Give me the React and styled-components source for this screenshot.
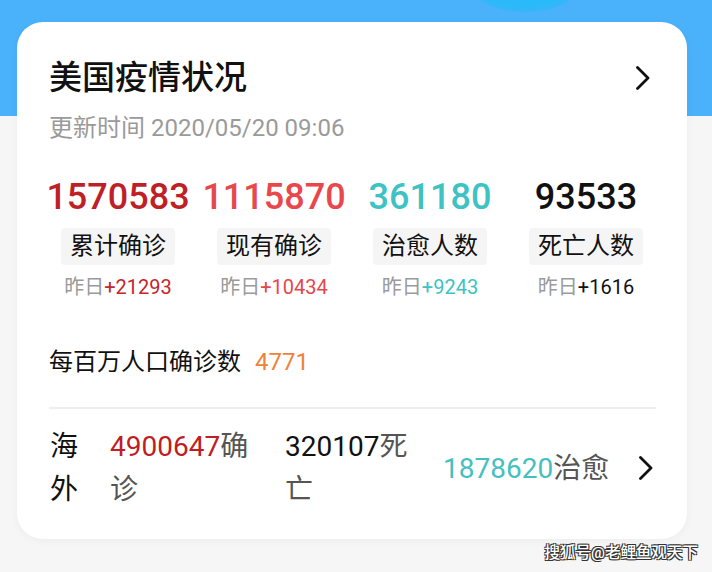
import React from "react";
import styled, { createGlobalStyle } from "styled-components";

const GlobalStyle = createGlobalStyle`
  html, body {
    margin: 0;
    padding: 0;
  }
  body {
    font-family: Roboto, "Noto Sans CJK SC", sans-serif;
    background: #f6f6f6;
  }
`;

const Page = styled.div`
  position: relative;
  width: 712px;
  height: 572px;
  overflow: hidden;
  background: linear-gradient(to bottom, #4ab1fb 0, #4ab1fb 116px, #f6f6f6 116px);
  padding: 22px 25px 0 17px;
  box-sizing: border-box;

  &::before {
    content: "";
    position: absolute;
    left: 472px;
    top: -40px;
    width: 106px;
    height: 52px;
    border-radius: 50%;
    background: radial-gradient(ellipse at center, #22bdf9 0%, #2bb9fa 55%, rgba(74, 177, 251, 0) 100%);
  }
`;

const Card = styled.div`
  position: relative;
  background: #fff;
  border-radius: 26px;
  box-shadow: 0 2px 8px rgba(0, 0, 0, 0.04);
  padding: 34px 23px 28px;
`;

const Header = styled.div`
  display: flex;
  align-items: center;
  justify-content: space-between;
  padding: 0 9px;
`;

const Title = styled.div`
  font-size: 33px;
  line-height: 44px;
  font-weight: 500;
  color: #111;
`;

const Chevron = ({ size = 24 }) => (
  <svg width="16" height={size} viewBox="0 0 16 24" fill="none">
    <path d="M2.5 1.5 L13 12 L2.5 22.5" stroke="#111" strokeWidth="2.8" strokeLinecap="round" strokeLinejoin="round" />
  </svg>
);

const ChevronWrap = styled.div`
  display: flex;
  align-items: center;
  margin-right: 4px;
`;

const Updated = styled.div`
  margin-top: 12px;
  padding: 0 9px;
  font-size: 24px;
  line-height: 32px;
  color: #9a9a9a;
`;

const Stats = styled.div`
  display: grid;
  grid-template-columns: repeat(4, 1fr);
  margin-top: 31px;
`;

const Stat = styled.div`
  display: flex;
  flex-direction: column;
  align-items: center;
`;

const BigNumber = styled.div`
  font-size: 36px;
  line-height: 44px;
  font-weight: 500;
  color: ${(p) => p.color};
`;

const Tag = styled.div`
  margin-top: 9px;
  height: 37px;
  line-height: 37px;
  padding: 0 9px;
  background: #f5f5f5;
  border-radius: 4px;
  font-size: 24px;
  color: #111;
`;

const Yesterday = styled.div`
  margin-top: 8px;
  font-size: 20px;
  line-height: 28px;
  color: #9a9a9a;

  span {
    color: ${(p) => p.color};
  }
`;

const PerMillion = styled.div`
  margin-top: 45px;
  padding: 0 9px;
  font-size: 24px;
  line-height: 32px;
  color: #111;

  span {
    color: #f0823a;
    margin-left: 14px;
  }
`;

const Divider = styled.div`
  height: 2px;
  background: #efefef;
  margin: 29px 8px 16px 9px;
`;

const Abroad = styled.div`
  display: flex;
  align-items: center;
  padding: 0 0 0 10px;
  font-size: 28px;
  line-height: 43px;
`;

const AbroadLabel = styled.div`
  width: 28px;
  color: #111;
  margin-right: 32px;
`;

const AbroadItem = styled.div`
  width: ${(p) => p.width}px;
  margin-right: ${(p) => p.gap || 0}px;
  color: #555;
  word-break: break-all;

  b {
    font-weight: 400;
    color: ${(p) => p.color};
  }
`;

const Watermark = styled.div`
  position: absolute;
  right: 14px;
  bottom: 9px;
  font-size: 15.5px;
  line-height: 20px;
  color: #fff;
  font-weight: 500;
  text-shadow: -1px -1px 0 #333, 1px -1px 0 #333, -1px 1px 0 #333, 1px 1px 0 #333;
`;

const stats = [
  { value: "1570583", label: "累计确诊", delta: "+21293", color: "#bf1f27", deltaColor: "#c4262c" },
  { value: "1115870", label: "现有确诊", delta: "+10434", color: "#e8474c", deltaColor: "#e5474b" },
  { value: "361180", label: "治愈人数", delta: "+9243", color: "#3ec3c4", deltaColor: "#3ec3c4" },
  { value: "93533", label: "死亡人数", delta: "+1616", color: "#111", deltaColor: "#111" },
];

export default function App() {
  return (
    <>
      <GlobalStyle />
      <Page>
        <Card>
          <Header>
            <Title>美国疫情状况</Title>
            <ChevronWrap>
              <Chevron />
            </ChevronWrap>
          </Header>
          <Updated>更新时间 2020/05/20 09:06</Updated>

          <Stats>
            {stats.map((s) => (
              <Stat key={s.label}>
                <BigNumber color={s.color}>{s.value}</BigNumber>
                <Tag>{s.label}</Tag>
                <Yesterday color={s.deltaColor}>
                  昨日<span>{s.delta}</span>
                </Yesterday>
              </Stat>
            ))}
          </Stats>

          <PerMillion>
            每百万人口确诊数<span>4771</span>
          </PerMillion>

          <Divider />

          <Abroad>
            <AbroadLabel>海外</AbroadLabel>
            <AbroadItem width={145} gap={30} color="#c01d24">
              <b>4900647</b>确诊
            </AbroadItem>
            <AbroadItem width={130} gap={28} color="#111">
              <b>320107</b>死亡
            </AbroadItem>
            <AbroadItem width={172} gap={23} color="#45c0c1">
              <b>1878620</b>治愈
            </AbroadItem>
            <ChevronWrap>
              <Chevron />
            </ChevronWrap>
          </Abroad>
        </Card>
        <Watermark>搜狐号@老鲤鱼观天下</Watermark>
      </Page>
    </>
  );
}
